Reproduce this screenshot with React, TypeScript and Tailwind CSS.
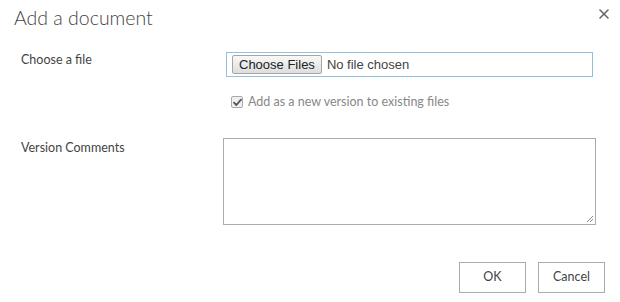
import { X } from "lucide-react";

function CheckMark() {
  return (
    <span className="flex h-[12px] w-[12px] items-center justify-center rounded-[2px] border border-[#a9a9a9] bg-[#f0f0f0]">
      <svg width="9" height="9" viewBox="0 0 9 9">
        <path d="M1 4.6 L3.4 7 L8 1.6" fill="none" stroke="#555" strokeWidth="1.8" strokeLinecap="round" strokeLinejoin="round" />
      </svg>
    </span>
  );
}

function App() {
  return (
    <div className="relative flex h-[302px] w-[620px] flex-col bg-white text-[12.5px] text-[#444] font-['Lato','Noto_Sans',sans-serif]">
      {/* header */}
      <div className="flex items-start justify-between pl-[14px] pr-[8px] pt-[4px]">
        <h1 className="text-[19.5px] font-light leading-[28px] text-[#444]">Add a document</h1>
        <button className="mt-[2px] text-[#666]">
          <X size={16} strokeWidth={2.4} />
        </button>
      </div>

      {/* choose file */}
      <div className="mt-[20px] flex">
        <div className="w-[226px] pl-[21px] -mt-[1px]">Choose a file</div>
        <div className="flex flex-col">
          <div className="flex h-[25px] w-[367px] items-center border border-[#92c0e0] pl-[5px] font-['Liberation_Sans',Arial,sans-serif] text-[13px] text-[#222]">
            <span className="flex h-[19px] items-center rounded-[2px] border border-[#a6a6a6] bg-gradient-to-b from-[#f8f8f8] to-[#dedede] px-[6px]">
              Choose Files
            </span>
            <span className="ml-[5px] text-[#444]">No file chosen</span>
          </div>
          <label className="mt-[16px] flex items-center gap-[5px] pl-[5px] text-[#888]">
            <CheckMark />
            <span>Add as a new version to existing files</span>
          </label>
        </div>
      </div>

      {/* comments */}
      <div className="mt-[26px] flex">
        <div className="w-[223px] pl-[21px] pt-[1px]">Version Comments</div>
        <div className="relative h-[87px] w-[373px] border border-[#ababab]">
          <svg className="absolute bottom-[1px] right-[1px]" width="8" height="8" viewBox="0 0 8 8">
            <path d="M7 1 L1 7 M7 4 L4 7" stroke="#888" strokeWidth="1" />
          </svg>
        </div>
      </div>

      {/* buttons */}
      <div className="mt-[37px] flex justify-end gap-[12px] pr-[15px]">
        <button className="h-[31px] w-[67px] border border-[#ababab] bg-white text-[#444]">OK</button>
        <button className="h-[31px] w-[67px] border border-[#ababab] bg-white text-[#444]">Cancel</button>
      </div>
    </div>
  );
}

export default App;
